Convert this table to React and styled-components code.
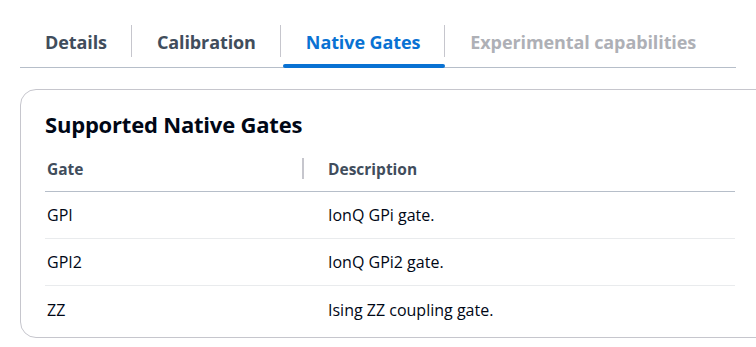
import React from "react";
import styled, { createGlobalStyle } from "styled-components";

const GlobalStyle = createGlobalStyle`
  body {
    margin: 0;
    background: #ffffff;
    font-family: "Open Sans", "Noto Sans", sans-serif;
    color: #000716;
    overflow: hidden;
  }
`;

const Page = styled.div`
  padding: 0 0 0 20px;
  width: 760px;
`;

const TabBar = styled.div`
  display: flex;
  align-items: stretch;
  width: 716px;
  height: 68px;
  padding-top: 16px;
  border-bottom: 1px solid #b6bec9;
  box-sizing: border-box;
`;

const Tab = styled.div`
  position: relative;
  display: flex;
  align-items: center;
  padding: 0 25px;
  font-size: 18px;
  font-weight: 700;
  letter-spacing: -0.1px;
  color: ${(p) => (p.$active ? "#0972d3" : p.$disabled ? "#aeb0b6" : "#414d5c")};

  &:not(:last-child)::before {
    content: "";
    position: absolute;
    right: 0;
    top: 9px;
    height: 32px;
    width: 1px;
    background: #c6c6cd;
  }

  ${(p) =>
    p.$active &&
    `
    &::after {
      content: "";
      position: absolute;
      left: 2px;
      right: 0;
      bottom: -1px;
      height: 4px;
      border-radius: 2px;
      background: #0972d3;
    }
  `}
`;

const Card = styled.section`
  margin-top: 21px;
  border: 1px solid #c6c6cd;
  border-radius: 16px;
  padding: 20px 0 0 24px;
  height: 249px;
  box-sizing: border-box;
`;

const Heading = styled.h2`
  margin: 0;
  font-size: 22px;
  line-height: 28px;
  font-weight: 700;
  letter-spacing: -0.2px;
  color: #000716;
`;

const Table = styled.div`
  margin-top: 13px;
  width: 690px;
  display: grid;
  grid-template-columns: 259px 1fr;
`;

const HeadCell = styled.div`
  position: relative;
  height: 41px;
  display: flex;
  align-items: center;
  padding-left: ${(p) => (p.$first ? "2px" : "24px")};
  padding-bottom: 4px;
  box-sizing: border-box;
  font-size: 15.5px;
  font-weight: 700;
  color: #414d5c;
  border-bottom: 1px solid #b6bec9;

  ${(p) =>
    p.$first &&
    `
    &::after {
      content: "";
      position: absolute;
      right: 0;
      top: 7px;
      height: 21px;
      width: 2px;
      background: #c6c6cd;
    }
  `}
`;

const Cell = styled.div`
  height: 47px;
  display: flex;
  align-items: center;
  padding-left: ${(p) => (p.$first ? "2px" : "24px")};
  font-size: 16px;
  color: #000716;
  border-bottom: ${(p) => (p.$last ? "none" : "1px solid #e9ebed")};
  box-sizing: border-box;
`;

const tabs = [
  { label: "Details" },
  { label: "Calibration" },
  { label: "Native Gates", active: true },
  { label: "Experimental capabilities", disabled: true },
];

const gates = [
  { name: "GPI", description: "IonQ GPi gate." },
  { name: "GPI2", description: "IonQ GPi2 gate." },
  { name: "ZZ", description: "Ising ZZ coupling gate." },
];

export default function App() {
  return (
    <Page>
      <GlobalStyle />
      <TabBar>
        {tabs.map((t) => (
          <Tab key={t.label} $active={t.active} $disabled={t.disabled}>
            {t.label}
          </Tab>
        ))}
      </TabBar>
      <Card>
        <Heading>Supported Native Gates</Heading>
        <Table>
          <HeadCell $first>Gate</HeadCell>
          <HeadCell>Description</HeadCell>
          {gates.map((g, i) => (
            <React.Fragment key={g.name}>
              <Cell $first $last={i === gates.length - 1}>
                {g.name}
              </Cell>
              <Cell $last={i === gates.length - 1}>{g.description}</Cell>
            </React.Fragment>
          ))}
        </Table>
      </Card>
    </Page>
  );
}
